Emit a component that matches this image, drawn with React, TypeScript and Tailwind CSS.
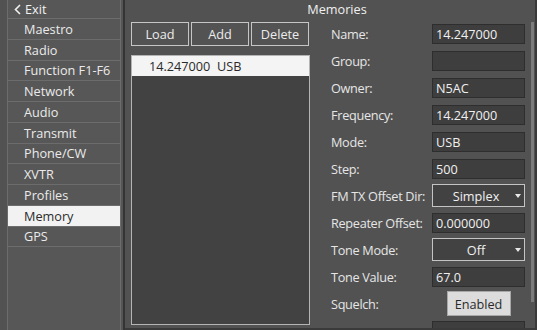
import React from "react";

const navItems = [
  "Maestro",
  "Radio",
  "Function F1-F6",
  "Network",
  "Audio",
  "Transmit",
  "Phone/CW",
  "XVTR",
  "Profiles",
  "Memory",
  "GPS",
];

type Field =
  | { label: string; kind: "input"; value: string }
  | { label: string; kind: "combo"; value: string }
  | { label: string; kind: "button"; value: string };

const fields: Field[] = [
  { label: "Name:", kind: "input", value: "14.247000" },
  { label: "Group:", kind: "input", value: "" },
  { label: "Owner:", kind: "input", value: "N5AC" },
  { label: "Frequency:", kind: "input", value: "14.247000" },
  { label: "Mode:", kind: "input", value: "USB" },
  { label: "Step:", kind: "input", value: "500" },
  { label: "FM TX Offset Dir:", kind: "combo", value: "Simplex" },
  { label: "Repeater Offset:", kind: "input", value: "0.000000" },
  { label: "Tone Mode:", kind: "combo", value: "Off" },
  { label: "Tone Value:", kind: "input", value: "67.0" },
  { label: "Squelch:", kind: "button", value: "Enabled" },
  { label: "", kind: "input", value: "" },
];

function Caret() {
  return (
    <svg width="6" height="4" viewBox="0 0 6 4" className="shrink-0">
      <polygon points="0,0 6,0 3,4" fill="#e8e8e8" />
    </svg>
  );
}

export default function App() {
  return (
    <div
      className="w-[537px] h-[330px] flex bg-[#555555] text-[#ebebeb] overflow-hidden text-[12.7px] leading-[16px]"
      style={{ fontFamily: '"Open Sans", "Noto Sans", sans-serif' }}
    >
      {/* left strip */}
      <div className="w-[7px] shrink-0 bg-[#525252]" />
      {/* sidebar */}
      <div className="w-[114px] shrink-0 flex flex-col border-l border-r border-[#6c6c6c] bg-[#575757]">
        <div className="h-[18px] shrink-0 flex items-center pl-[6px] gap-[4px]">
          <svg width="7" height="11" viewBox="0 0 7 11">
            <polyline points="6,1 1.5,5.5 6,10" fill="none" stroke="#f0f0f0" strokeWidth="1.6" />
          </svg>
          <span className="text-[#f2f2f2]">Exit</span>
        </div>
        {navItems.map((item) => (
          <div
            key={item}
            className={
              item === "Memory"
                ? "h-[20.75px] shrink-0 flex items-center pl-[16px] border-t border-[#6c6c6c] bg-[#f2f2f2] text-[#2b2b2b]"
                : "h-[20.75px] shrink-0 flex items-center pl-[16px] border-t border-[#6c6c6c] text-[#ebebeb]"
            }
          >
            {item}
          </div>
        ))}
        <div className="border-t border-[#6c6c6c]" />
      </div>
      {/* separator */}
      <div className="w-[2px] shrink-0 bg-[#555555]" />
      <div className="w-[2px] shrink-0 bg-[#343434]" />
      {/* main panel */}
      <div className="flex-1 min-w-0 flex flex-col bg-[#525252] border-r-2 border-b-2 border-[#3a3a3a]">
        <div className="h-[18px] shrink-0 flex items-center justify-center pl-[14px] text-[#f0f0f0]">
          Memories
        </div>
        <div className="flex flex-1 min-h-0 overflow-hidden">
          {/* left column */}
          <div className="flex flex-col pl-[6px] pt-[4px] w-[185px] shrink-0">
            <div className="flex gap-[2px] shrink-0">
              {["Load", "Add", "Delete"].map((b) => (
                <div
                  key={b}
                  className="w-[58px] h-[24px] flex items-center justify-center border border-[#c6c6c6] bg-[#535353] text-[#ececec]"
                >
                  {b}
                </div>
              ))}
            </div>
            <div className="mt-[9px] w-[179px] h-[270px] shrink-0 border border-[#b4b4b4] bg-[#424242] flex flex-col">
              <div className="h-[20px] shrink-0 bg-[#f4f4f4] text-[#2a2a2a] flex items-center pl-[17px] whitespace-pre">
                {"14.247000  USB"}
              </div>
            </div>
          </div>
          {/* form */}
          <div className="flex flex-col pl-[21px] pt-[2px] w-[215px] shrink-0">
            {fields.map((f, i) => (
              <div key={i} className="h-[27px] flex items-center shrink-0">
                <div className="w-[101px] shrink-0 text-[#e6e6e6] whitespace-nowrap tracking-[-0.3px]">
                  {f.label}
                </div>
                {f.kind === "input" && (
                  <div className="w-[93px] h-[20px] bg-[#3e3e3e] border border-[#2e2e2e] flex items-center pl-[3px] text-[#f0f0f0]">
                    {f.value}
                  </div>
                )}
                {f.kind === "combo" && (
                  <div className="w-[93px] h-[23px] bg-[#424242] border border-[#c4c4c4] flex items-center pr-[3px] text-[#f0f0f0]">
                    <span className="flex-1 text-center pl-[4px]">{f.value}</span>
                    <Caret />
                  </div>
                )}
                {f.kind === "button" && (
                  <div className="w-[93px] flex justify-center">
                    <div className="w-[64px] h-[25px] bg-[#dcdcdc] border border-[#a8a8a8] flex items-center justify-center text-[#2a2a2a]">
                      {f.value}
                    </div>
                  </div>
                )}
              </div>
            ))}
          </div>
          {/* scrollbar */}
          <div className="flex-1 flex justify-end pr-[1px] pt-[4px]">
            <div className="w-[3px] h-[280px] bg-[#7c7c7c]" />
          </div>
        </div>
      </div>
    </div>
  );
}
